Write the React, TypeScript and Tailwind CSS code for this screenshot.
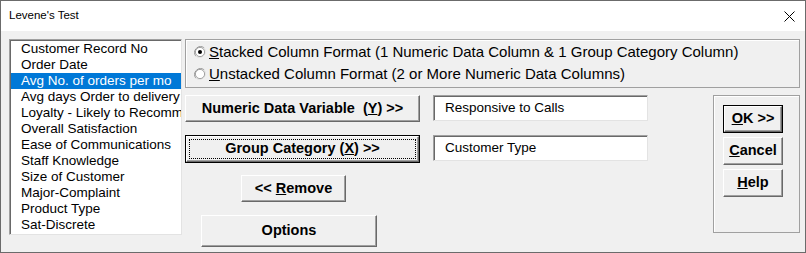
import React from "react";

const items = [
  "Customer Record No",
  "Order Date",
  "Avg No. of orders per mo",
  "Avg days Order to delivery",
  "Loyalty - Likely to Recommend",
  "Overall Satisfaction",
  "Ease of Communications",
  "Staff Knowledge",
  "Size of Customer",
  "Major-Complaint",
  "Product Type",
  "Sat-Discrete",
];

const font = { fontFamily: '"Liberation Sans", Arial, sans-serif' };

// raised 3D push button, windows classic look
function Btn({
  children,
  className = "",
  isDefault = false,
  focused = false,
}: {
  children: React.ReactNode;
  className?: string;
  isDefault?: boolean;
  focused?: boolean;
}) {
  return (
    <div className={`${className} ${isDefault ? "border border-black" : ""} flex`}>
      <div className="relative flex-1 flex items-center justify-center bg-[#f0f0f0] border border-t-white border-l-white border-r-[#696969] border-b-[#696969] shadow-[inset_-1px_-1px_0_#a0a0a0] font-bold text-black">
        {focused && (
          <div className="absolute inset-[2px] border border-dotted border-black" />
        )}
        {children}
      </div>
    </div>
  );
}

function Radio({ checked }: { checked?: boolean }) {
  return (
    <svg width="12" height="12" viewBox="0 0 12 12" className="shrink-0">
      <path d="M10.2 1.8 A6 6 0 0 0 1.8 10.2" stroke="#a0a0a0" strokeWidth="1" fill="none" />
      <path d="M1.8 10.2 A6 6 0 0 0 10.2 1.8" stroke="#e3e3e3" strokeWidth="1" fill="none" />
      <circle cx="6" cy="6" r="4.6" fill="white" stroke="#696969" strokeWidth="0.6" />
      {checked && <circle cx="6" cy="6" r="2" fill="black" />}
    </svg>
  );
}

function TextBox({ value }: { value: string }) {
  return (
    <div className="h-[26px] bg-white border border-t-[#a0a0a0] border-l-[#a0a0a0] border-r-[#e3e3e3] border-b-[#e3e3e3] shadow-[inset_1px_1px_0_#696969] flex items-center pl-[11px] text-[13.5px] text-black">
      {value}
    </div>
  );
}

export default function App() {
  return (
    <div
      className="w-[806px] h-[253px] flex flex-col border border-[#6b6b6b] bg-white overflow-hidden"
      style={font}
    >
      {/* title bar */}
      <div className="h-[30px] bg-white flex items-center justify-between shrink-0">
        <span className="pl-[8px] text-[11.5px] text-black">Levene's Test</span>
        <svg width="11" height="11" viewBox="0 0 11 11" className="mr-[10px]">
          <path d="M0.5 0.5 L10.5 10.5 M10.5 0.5 L0.5 10.5" stroke="black" strokeWidth="1" />
        </svg>
      </div>

      {/* body */}
      <div className="flex-1 bg-[#f0f0f0] flex pl-[8px] pt-[8px]">
        {/* variable list */}
        <div className="w-[173px] h-[196px] bg-white border border-t-[#a0a0a0] border-l-[#a0a0a0] border-r-[#e3e3e3] border-b-[#e3e3e3] shadow-[inset_1px_1px_0_#696969] pt-[1px] pl-[1px] overflow-hidden">
          {items.map((it, i) => (
            <div
              key={it}
              className={`h-[16px] leading-[16px] pl-[10px] whitespace-nowrap overflow-hidden text-[13.5px] ${
                i === 2 ? "bg-[#0078d7] text-white" : "text-black"
              }`}
            >
              {it}
            </div>
          ))}
        </div>

        <div className="ml-[3px] w-[615px] flex flex-col">
          {/* format radio group */}
          <div className="h-[49px] border border-[#a0a0a0] shadow-[inset_1px_1px_0_white] flex flex-col pt-[1px] pl-[8px] text-[15px] text-black">
            <div className="h-[22px] flex items-center gap-[3px]">
              <Radio checked />
              <span>
                <u>S</u>tacked Column Format (1 Numeric Data Column &amp; 1 Group Category Column)
              </span>
            </div>
            <div className="h-[22px] flex items-center gap-[3px]">
              <Radio />
              <span>
                <u>U</u>nstacked Column Format (2 or More Numeric Data Columns)
              </span>
            </div>
          </div>

          <div className="flex mt-[7px]">
            {/* action buttons */}
            <div className="w-[235px] flex flex-col text-[14.5px]">
              <Btn className="h-[27px]">
                Numeric Data Variable&nbsp;&nbsp;(<u>Y</u>) &gt;&gt;
              </Btn>
              <Btn className="h-[28px] mt-[13px]" isDefault focused>
                Group Category (<u>X</u>) &gt;&gt;
              </Btn>
              <Btn className="h-[27px] mt-[12px] ml-[56px] w-[105px]">
                &lt;&lt;&nbsp;<u>R</u>emove
              </Btn>
              <Btn className="h-[32px] mt-[13px] ml-[16px] w-[176px]">Options</Btn>
            </div>

            {/* selected variables */}
            <div className="ml-[13px] w-[215px] flex flex-col gap-[14px]">
              <TextBox value="Responsive to Calls" />
              <TextBox value="Customer Type" />
            </div>

            {/* ok / cancel / help */}
            <div className="ml-[65px] w-[87px] h-[138px] border border-[#a0a0a0] shadow-[inset_1px_1px_0_white] flex flex-col pt-[9px] pl-[9px] gap-[4px] text-[14.5px]">
              <Btn className="h-[28px] w-[60px]" isDefault>
                <u>O</u>K &gt;&gt;
              </Btn>
              <Btn className="h-[28px] w-[60px]">
                <u>C</u>ancel
              </Btn>
              <Btn className="h-[28px] w-[60px]">
                <u>H</u>elp
              </Btn>
            </div>
          </div>
        </div>
      </div>
    </div>
  );
}
